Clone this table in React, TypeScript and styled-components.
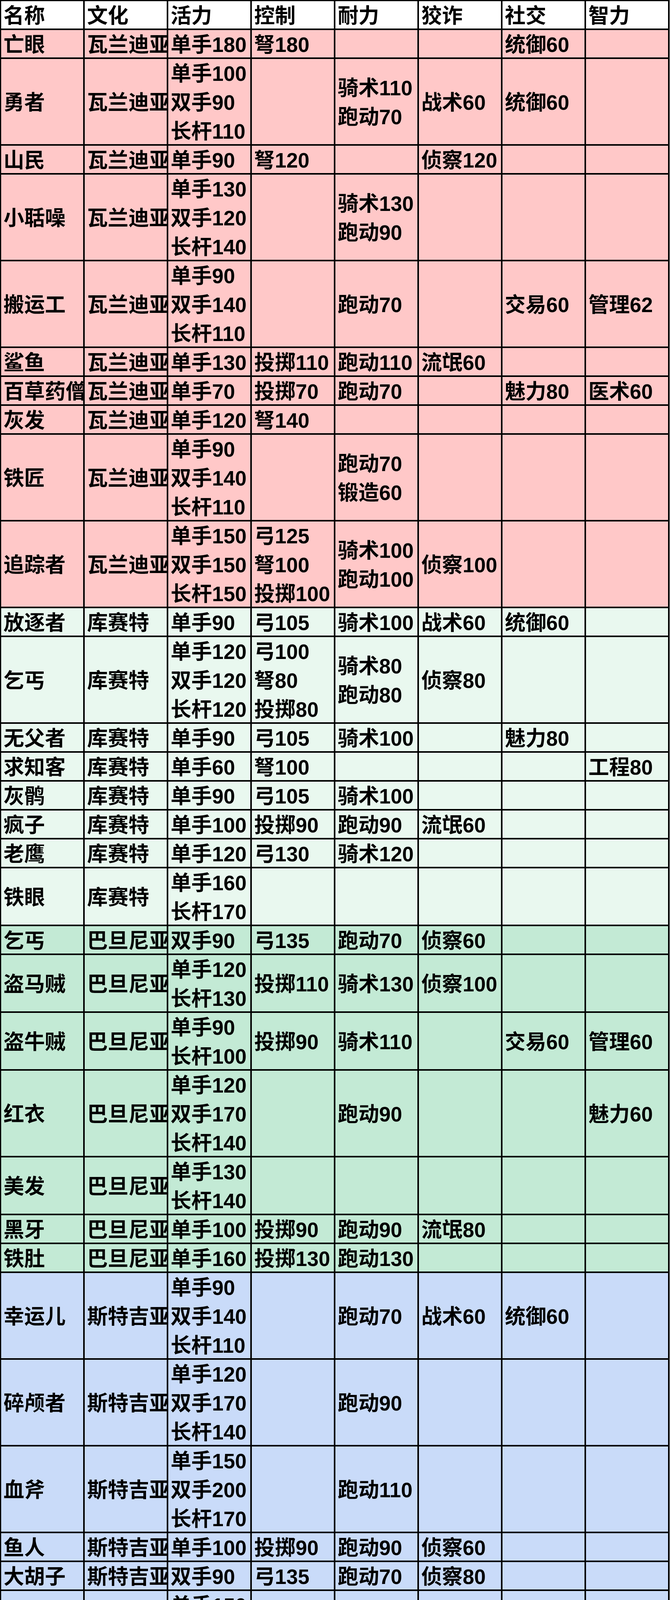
import styled, { createGlobalStyle } from 'styled-components';

const GlobalStyle = createGlobalStyle`
  html, body {
    margin: 0;
    padding: 0;
    background: #ffffff;
  }
`;

type Culture = 'head' | 'vlandia' | 'khuzait' | 'battania' | 'sturgia' | 'aserai' | 'empire';

const colours: Record<Culture, string> = {
  head: '#ffffff',
  vlandia: '#ffc8c8',
  khuzait: '#e9f8ef',
  battania: '#c3ead5',
  sturgia: '#c9dbf9',
  aserai: '#ffefb3',
  empire: '#fcebfc',
};

// each cell: lines split by '/'
const header = ['名称', '文化', '活力', '控制', '耐力', '狡诈', '社交', '智力'];

const rows: [Culture, string[]][] = [
  ['vlandia', ['亡眼', '瓦兰迪亚', '单手180', '弩180', '', '', '统御60', '']],
  ['vlandia', ['勇者', '瓦兰迪亚', '单手100/双手90/长杆110', '', '骑术110/跑动70', '战术60', '统御60', '']],
  ['vlandia', ['山民', '瓦兰迪亚', '单手90', '弩120', '', '侦察120', '', '']],
  ['vlandia', ['小聒噪', '瓦兰迪亚', '单手130/双手120/长杆140', '', '骑术130/跑动90', '', '', '']],
  ['vlandia', ['搬运工', '瓦兰迪亚', '单手90/双手140/长杆110', '', '跑动70', '', '交易60', '管理62']],
  ['vlandia', ['鲨鱼', '瓦兰迪亚', '单手130', '投掷110', '跑动110', '流氓60', '', '']],
  ['vlandia', ['百草药僧', '瓦兰迪亚', '单手70', '投掷70', '跑动70', '', '魅力80', '医术60']],
  ['vlandia', ['灰发', '瓦兰迪亚', '单手120', '弩140', '', '', '', '']],
  ['vlandia', ['铁匠', '瓦兰迪亚', '单手90/双手140/长杆110', '', '跑动70/锻造60', '', '', '']],
  ['vlandia', ['追踪者', '瓦兰迪亚', '单手150/双手150/长杆150', '弓125/弩100/投掷100', '骑术100/跑动100', '侦察100', '', '']],
  ['khuzait', ['放逐者', '库赛特', '单手90', '弓105', '骑术100', '战术60', '统御60', '']],
  ['khuzait', ['乞丐', '库赛特', '单手120/双手120/长杆120', '弓100/弩80/投掷80', '骑术80/跑动80', '侦察80', '', '']],
  ['khuzait', ['无父者', '库赛特', '单手90', '弓105', '骑术100', '', '魅力80', '']],
  ['khuzait', ['求知客', '库赛特', '单手60', '弩100', '', '', '', '工程80']],
  ['khuzait', ['灰鹘', '库赛特', '单手90', '弓105', '骑术100', '', '', '']],
  ['khuzait', ['疯子', '库赛特', '单手100', '投掷90', '跑动90', '流氓60', '', '']],
  ['khuzait', ['老鹰', '库赛特', '单手120', '弓130', '骑术120', '', '', '']],
  ['khuzait', ['铁眼', '库赛特', '单手160/长杆170', '', '', '', '', '']],
  ['battania', ['乞丐', '巴旦尼亚', '双手90', '弓135', '跑动70', '侦察60', '', '']],
  ['battania', ['盗马贼', '巴旦尼亚', '单手120/长杆130', '投掷110', '骑术130', '侦察100', '', '']],
  ['battania', ['盗牛贼', '巴旦尼亚', '单手90/长杆100', '投掷90', '骑术110', '', '交易60', '管理60']],
  ['battania', ['红衣', '巴旦尼亚', '单手120/双手170/长杆140', '', '跑动90', '', '', '魅力60']],
  ['battania', ['美发', '巴旦尼亚', '单手130/长杆140', '', '', '', '', '']],
  ['battania', ['黑牙', '巴旦尼亚', '单手100', '投掷90', '跑动90', '流氓80', '', '']],
  ['battania', ['铁肚', '巴旦尼亚', '单手160', '投掷130', '跑动130', '', '', '']],
  ['sturgia', ['幸运儿', '斯特吉亚', '单手90/双手140/长杆110', '', '跑动70', '战术60', '统御60', '']],
  ['sturgia', ['碎颅者', '斯特吉亚', '单手120/双手170/长杆140', '', '跑动90', '', '', '']],
  ['sturgia', ['血斧', '斯特吉亚', '单手150/双手200/长杆170', '', '跑动110', '', '', '']],
  ['sturgia', ['鱼人', '斯特吉亚', '单手100', '投掷90', '跑动90', '侦察60', '', '']],
  ['sturgia', ['大胡子', '斯特吉亚', '双手90', '弓135', '跑动70', '侦察80', '', '']],
  ['sturgia', ['游方侠客', '斯特吉亚', '单手150/双手200/长杆170', '', '跑动110/锻造60', '', '', '']],
  ['aserai', ['学者', '阿塞莱', '单手100', '投掷90', '跑动90', '', '', '医术120']],
  ['aserai', ['猎隼', '阿塞莱', '单手120/长杆130', '投掷110', '骑术130', '战术100', '统御100', '']],
  ['aserai', ['王子', '阿塞莱', '单手130', '投掷110', '跑动110', '流氓141', '', '']],
  ['aserai', ['金血', '阿塞莱', '单手180/长杆190', '投掷150', '骑术170', '战术100', '统御100', '']],
  ['aserai', ['鬣狗', '阿塞莱', '单手160/长杆170', '', '', '流氓100', '', '']],
  ['aserai', ['剑士', '阿塞莱', '单手150/双手200/长杆170', '', '跑动110', '', '', '']],
  ['aserai', ['荒裔', '阿塞莱', '双手150', '弓185', '跑动110', '侦察140', '', '']],
  ['empire', ['公牛', '帝国', '单手120/双手170/长杆140', '', '跑动90', '', '', '']],
  ['empire', ['劫犯', '帝国', '单手100', '投掷90', '跑动90', '流氓60', '', '']],
  ['empire', ['学者', '帝国', '单手70', '投掷70', '跑动70', '', '', '工程60']],
  ['empire', ['山民', '帝国', '单手90', '弓135', '跑动70', '', '', '']],
  ['empire', ['屠夫', '帝国', '单手130', '投掷110', '跑动110', '流氓62', '', '']],
  ['empire', ['急救士', '帝国', '单手70', '投掷70', '跑动70', '', '', '医术80']],
  ['empire', ['沉默者', '帝国', '单手130/双手120/长杆140', '', '骑术130/跑动90', '战术60', '统御60', '']],
  ['empire', ['野猪', '帝国', '单手160/长杆170', '', '', '', '', '']],
];

function App() {
  return (
    <>
      <GlobalStyle />
      <Sheet>
        <TableRow $lines={1}>
          {header.map((h) => (
            <Cell key={h} $bg={colours.head}>
              <Line>{h}</Line>
            </Cell>
          ))}
        </TableRow>
        {rows.map(([culture, cells], i) => {
          const split = cells.map((c) => (c ? c.split('/') : []));
          const lines = Math.max(1, ...split.map((s) => s.length));
          return (
            <TableRow key={i} $lines={lines}>
              {split.map((ls, j) => (
                <Cell key={j} $bg={colours[culture]}>
                  {ls.map((l, k) => (
                    <Line key={k}>{l}</Line>
                  ))}
                </Cell>
              ))}
            </TableRow>
          );
        })}
      </Sheet>
    </>
  );
}

const Sheet = styled.div`
  display: flex;
  flex-direction: column;
  gap: 4px;
  width: 1715px;
  box-sizing: border-box;
  padding: 3px 4px 6px 3px;
  background-color: #000000;
  font-family: 'Liberation Sans', 'Noto Sans CJK SC', sans-serif;
  font-weight: 700;
  font-size: 53px;
  color: #000000;
`;

const TableRow = styled.div<{ $lines: number }>`
  display: grid;
  grid-template-columns: repeat(8, 210px);
  gap: 4px;
  height: ${(p) => p.$lines * 74 - 4}px;
`;

const Cell = styled.div<{ $bg: string }>`
  display: flex;
  flex-direction: column;
  justify-content: center;
  gap: 4px;
  padding-left: 6px;
  background-color: ${(p) => p.$bg};
  overflow: hidden;
  white-space: nowrap;
`;

const Line = styled.div`
  height: 70px;
  line-height: 70px;
  flex-shrink: 0;
  padding-top: 3px;
  box-sizing: border-box;
`;

export default App;
